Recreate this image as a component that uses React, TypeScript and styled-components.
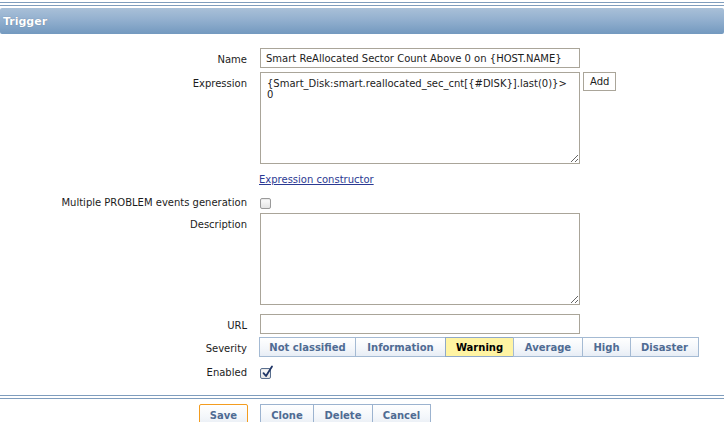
import React from 'react'
import styled, {createGlobalStyle} from 'styled-components'

const GlobalStyle = createGlobalStyle`
	html, body {
		margin: 0;
		padding: 0;
		background: #FFF;
	}
	body {
		font-family: "DejaVu Sans", Verdana, sans-serif;
		font-size: 10px;
		color: #1c1c1c;
	}
`

const Page = styled.div`
	width: 724px;
	height: 422px;
	overflow: hidden;
`

const DoubleRule = styled.div<{ $top: number }>`
	margin-top: ${props => props.$top}px;
	height: 2px;
	border-top: 1px solid #7f9dbd;
	border-bottom: 1px solid #7f9dbd;
`

const Header = styled.div`
	margin-top: 2px;
	height: 26px;
	display: flex;
	align-items: center;
	padding-left: 3px;
	border-radius: 2px;
	background: linear-gradient(to bottom, #a9c0d8 0%, #93b0cf 45%, #7399bf 100%);
	color: #FFF;
	font-weight: bold;
	font-size: 11px;
	text-shadow: 0 0 1px rgba(60, 80, 110, 0.6);
`

const Form = styled.div`
	padding-top: 12px;
	display: flex;
	flex-direction: column;
`

const Row = styled.div<{ $top?: number, $center?: boolean }>`
	display: flex;
	align-items: ${props => props.$center ? 'center' : 'flex-start'};
	padding-top: ${props => props.$top ?? 2}px;
	padding-bottom: 2px;
`

const Label = styled.div<{ $flat?: boolean }>`
	width: 248px;
	box-sizing: border-box;
	text-align: right;
	padding-right: 1px;
	padding-top: ${props => props.$flat ? 0 : 5}px;
	line-height: 14px;
	flex-shrink: 0;
`

const Field = styled.div`
	margin-left: 12px;
	display: flex;
	align-items: flex-start;
	gap: 3px;
`

const TextInput = styled.div`
	width: 320px;
	height: 20px;
	box-sizing: border-box;
	border: 1px solid #aaa599;
	padding: 2px 5px 0;
	line-height: 15px;
	white-space: nowrap;
	overflow: hidden;
`

const TextArea = styled.textarea`
	width: 320px;
	height: 92px;
	box-sizing: border-box;
	border: 1px solid #aaa599;
	padding: 5px 6px;
	margin: 0;
	font-family: "DejaVu Sans", Verdana, sans-serif;
	font-size: 10px;
	line-height: 11px;
	color: #1c1c1c;
	white-space: pre;
	outline: none;
`

const SmallButton = styled.button`
	height: 19px;
	padding: 0 6px;
	border: 1px solid #aaa599;
	background: #FFF;
	font-family: "DejaVu Sans", Verdana, sans-serif;
	font-size: 10px;
	color: #1c1c1c;
	line-height: 15px;
`

const Link = styled.a`
	display: block;
	margin-left: -1px;
	height: 20px;
	line-height: 20px;
	color: #2b3a93;
	text-decoration: underline;
`

const Box = styled.span<{ $checked?: boolean }>`
	display: inline-flex;
	align-items: center;
	justify-content: center;
	width: 11px;
	height: 11px;
	box-sizing: border-box;
	border: 1px solid ${props => props.$checked ? '#5a6f8e' : '#9a9a9a'};
	border-radius: 2px;
	background: linear-gradient(to bottom, #fdfdfd, #e4e4e4);
	position: relative;
	box-shadow: inset 0 1px 1px rgba(0, 0, 0, 0.08);
`

const Tick = styled.svg`
	position: absolute;
	left: 1px;
	top: -4px;
`

const Checkbox = ({checked}: { checked?: boolean }) => (
	<Box $checked={checked}>
		{checked && (
			<Tick width="12" height="13" viewBox="0 0 12 13">
				<path d="M1.5 8.2 L4 11 L10 1.5" fill="none" stroke="#1f3566" strokeWidth="1.8" strokeLinecap="round" strokeLinejoin="round"/>
			</Tick>
		)}
	</Box>
)

const SeverityGroup = styled.div`
	display: flex;
	margin-left: -1px;
`

const SeverityButton = styled.div<{ $active?: boolean, $width: number }>`
	width: ${props => props.$width}px;
	height: 20px;
	box-sizing: border-box;
	border: 1px solid #8fa9c8;
	margin-right: -1px;
	display: flex;
	align-items: center;
	justify-content: center;
	font-weight: bold;
	font-size: 10px;
	color: ${props => props.$active ? '#000' : '#4f6b93'};
	background: ${props => props.$active
		? '#fff4a3'
		: 'linear-gradient(to bottom, #ffffff 0%, #f3f6fa 60%, #e7edf5 100%)'};
	border-color: ${props => props.$active ? '#8fa9c8' : '#a4bad3'};
`

const Footer = styled.div`
	display: flex;
	margin-top: 5px;
`

const FooterLeft = styled.div`
	width: 247px;
	display: flex;
	justify-content: flex-end;
	flex-shrink: 0;
`

const FooterRight = styled.div`
	margin-left: 13px;
	display: flex;
`

const ActionButton = styled.div<{ $primary?: boolean, $width: number }>`
	width: ${props => props.$width}px;
	height: 22px;
	box-sizing: border-box;
	border: 1px solid ${props => props.$primary ? '#f39c1f' : '#9cb3cf'};
	border-radius: ${props => props.$primary ? '2px' : '0'};
	margin-right: -1px;
	display: flex;
	align-items: center;
	justify-content: center;
	font-weight: bold;
	font-size: 10px;
	color: #4f6b93;
	background: linear-gradient(to bottom, #ffffff 0%, #f3f6fa 60%, #e9eef5 100%);
`

const severities = [
	{name: 'Not classified', width: 97},
	{name: 'Information', width: 91},
	{name: 'Warning', width: 69, active: true},
	{name: 'Average', width: 70},
	{name: 'High', width: 49},
	{name: 'Disaster', width: 69},
]

const App = () => {
	return (
		<Page>
			<GlobalStyle/>
			<DoubleRule $top={2}/>
			<Header>Trigger</Header>
			<Form>
				<Row>
					<Label>Name</Label>
					<Field>
						<TextInput>Smart ReAllocated Sector Count Above 0 on {'{HOST.NAME}'}</TextInput>
					</Field>
				</Row>
				<Row>
					<Label>Expression</Label>
					<Field>
						<TextArea readOnly value={'{Smart_Disk:smart.reallocated_sec_cnt[{#DISK}].last(0)}>\n0'}/>
						<SmallButton>Add</SmallButton>
					</Field>
				</Row>
				<Row $top={4}>
					<Label/>
					<Field>
						<Link>Expression constructor</Link>
					</Field>
				</Row>
				<Row $top={4} $center>
					<Label $flat>Multiple PROBLEM events generation</Label>
					<Field>
						<Checkbox/>
					</Field>
				</Row>
				<Row $top={1}>
					<Label>Description</Label>
					<Field>
						<TextArea readOnly value=""/>
					</Field>
				</Row>
				<Row $top={7}>
					<Label>URL</Label>
					<Field>
						<TextInput/>
					</Field>
				</Row>
				<Row $top={1}>
					<Label>Severity</Label>
					<Field>
						<SeverityGroup>
							{severities.map(s => (
								<SeverityButton key={s.name} $active={s.active} $width={s.width}>{s.name}</SeverityButton>
							))}
						</SeverityGroup>
					</Field>
				</Row>
				<Row $top={7} $center>
					<Label $flat>Enabled</Label>
					<Field>
						<Checkbox checked/>
					</Field>
				</Row>
			</Form>
			<DoubleRule $top={13}/>
			<Footer>
				<FooterLeft>
					<ActionButton $primary $width={49}>Save</ActionButton>
				</FooterLeft>
				<FooterRight>
					<ActionButton $width={54}>Clone</ActionButton>
					<ActionButton $width={60}>Delete</ActionButton>
					<ActionButton $width={59}>Cancel</ActionButton>
				</FooterRight>
			</Footer>
		</Page>
	)
}

export default App
